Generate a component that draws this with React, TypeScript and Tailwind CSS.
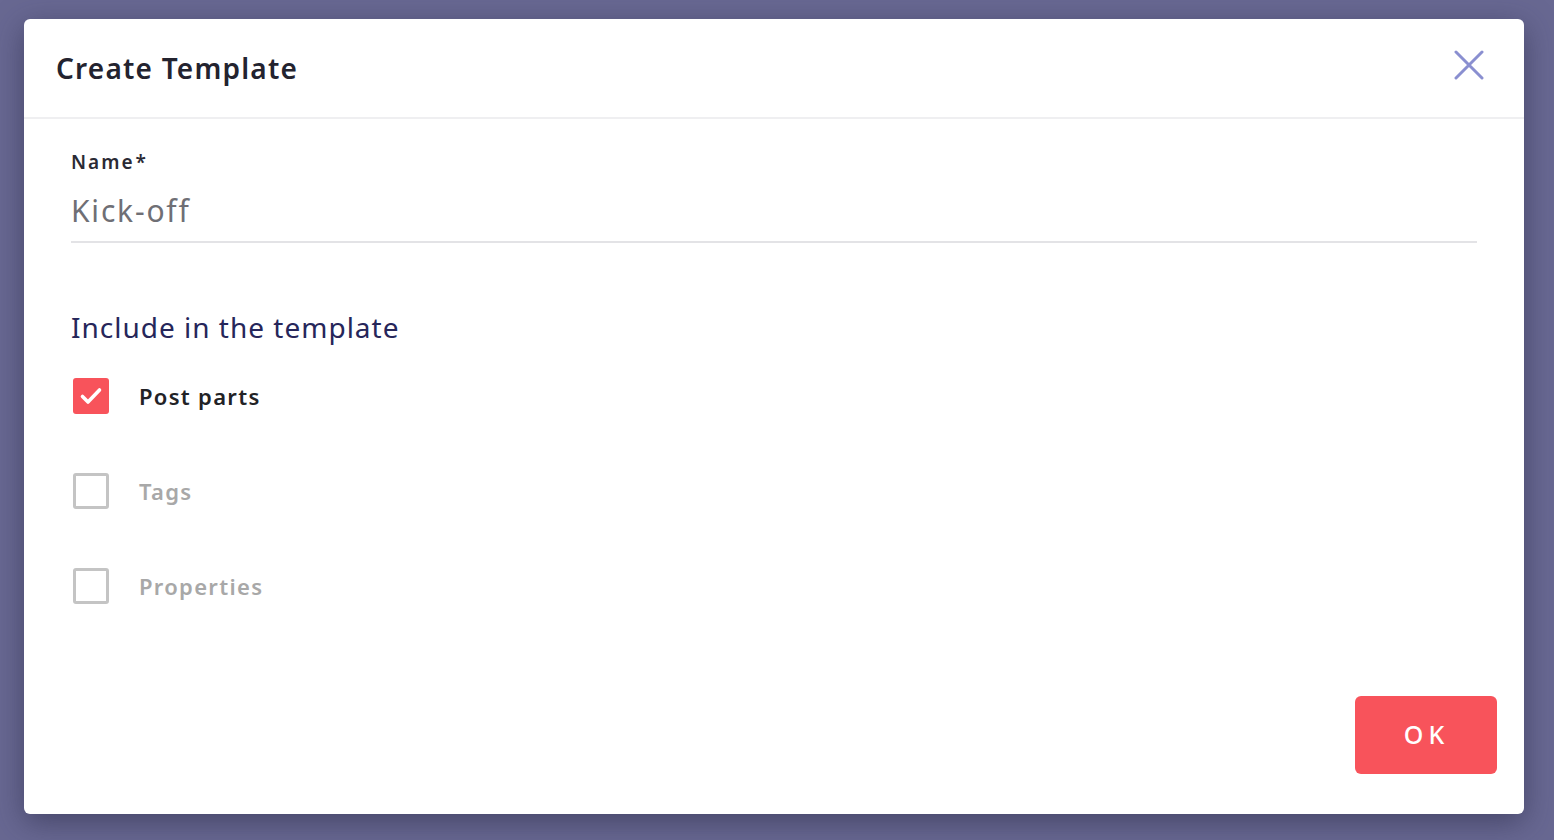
import { useState } from "react";

const font = { fontFamily: '"Noto Sans", "Open Sans", Arial, sans-serif' };

const CheckRow = ({ label, checked, onToggle }: { label: string; checked: boolean; onToggle: () => void }) => (
    <button type="button" onClick={onToggle} className="flex items-center h-[36px] text-left">
        {checked ? (
            <span className="w-[36px] h-[36px] rounded-[3px] bg-[#f8535b] flex items-center justify-center">
                <svg width="26" height="26" viewBox="0 0 26 26" fill="none">
                    <path d="M4.5 13.5l5.5 5.5L21.5 7" stroke="white" strokeWidth="3.6" strokeLinecap="round" strokeLinejoin="round" />
                </svg>
            </span>
        ) : (
            <span className="w-[36px] h-[36px] rounded-[3px] border-[3px] border-[#c4c4c4] bg-white" />
        )}
        <span className={`ml-[30px] text-[22px] font-semibold tracking-[1.3px] ${checked ? "text-[#222226]" : "text-[#a8a8a8]"}`}>
            {label}
        </span>
    </button>
);

const App = () => {
    const [name, setName] = useState("Kick-off");
    const [opts, setOpts] = useState({ parts: true, tags: false, props: false });

    return (
        <div style={font} className="w-full h-[840px] bg-[#686892] pl-[24px] pt-[19px] overflow-hidden">
            <div className="w-[1500px] h-[795px] bg-white rounded-[6px] shadow-[0_8px_30px_rgba(40,40,70,0.55)] flex flex-col">
                <div className="h-[100px] border-b-2 border-[#efeff1] flex items-center justify-between pl-[32px] pr-[40px]">
                    <h2 className="text-[28px] font-semibold text-[#23232f] tracking-[1.2px] mt-[-1px]">Create Template</h2>
                    <button type="button" className="w-[30px] h-[30px] flex items-center justify-center mt-[-6px]">
                        <svg width="30" height="30" viewBox="0 0 30 30">
                            <path d="M2 2L28 28M28 2L2 28" stroke="#8a8fd0" strokeWidth="3" strokeLinecap="round" />
                        </svg>
                    </button>
                </div>
                <div className="flex-1 flex flex-col pl-[47px] pr-[47px]">
                    <label htmlFor="name" className="mt-[29px] text-[19px] font-semibold text-[#2a2a34] tracking-[2px] leading-[28px]">
                        Name<span className="ml-[1px]">*</span>
                    </label>
                    <input
                        id="name"
                        value={name}
                        onChange={(e) => setName(e.target.value)}
                        className="mt-[3px] h-[64px] text-[30px] tracking-[1.8px] text-[#6f6f75] border-b-2 border-[#e3e3e6] outline-none bg-transparent"
                    />
                    <h3 className="mt-[66px] text-[28px] text-[#26265a] tracking-[1px] leading-[36px]">Include in the template</h3>
                    <div className="mt-[33px] flex flex-col gap-[59px] pl-[2px]">
                        <CheckRow label="Post parts" checked={opts.parts} onToggle={() => setOpts((p) => ({ ...p, parts: !p.parts }))} />
                        <CheckRow label="Tags" checked={opts.tags} onToggle={() => setOpts((p) => ({ ...p, tags: !p.tags }))} />
                        <CheckRow label="Properties" checked={opts.props} onToggle={() => setOpts((p) => ({ ...p, props: !p.props }))} />
                    </div>
                </div>
                <div className="flex justify-end pr-[27px] pb-[40px]">
                    <button type="button" className="w-[142px] h-[78px] rounded-[6px] bg-[#f8535b] text-white text-[25px] font-medium tracking-[5px] pl-[1px]">
                        OK
                    </button>
                </div>
            </div>
        </div>
    );
};

export default App;
